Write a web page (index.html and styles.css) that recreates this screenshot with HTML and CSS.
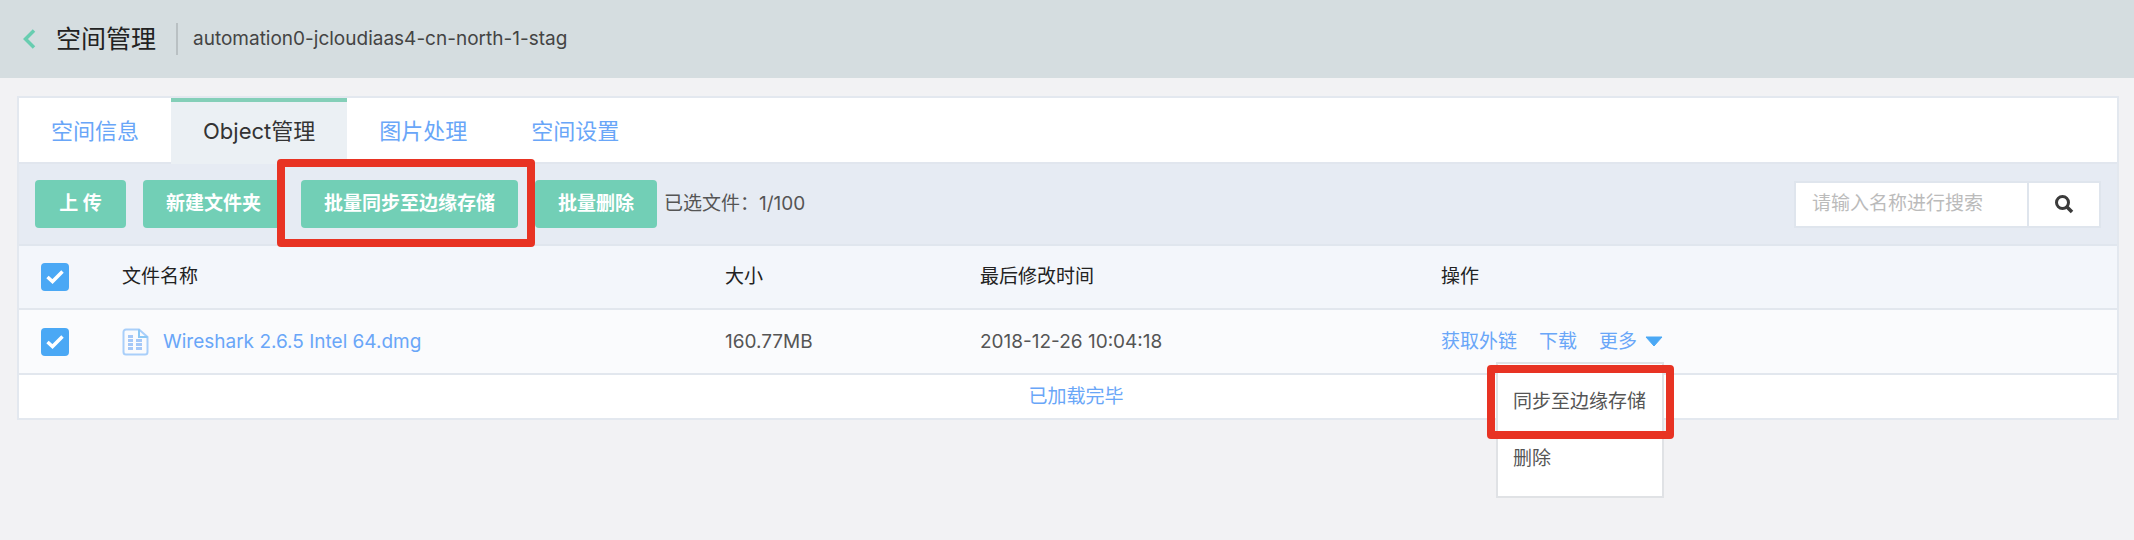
FILE: index.html
```html
<!DOCTYPE html>
<html lang="zh-CN">
<head>
<meta charset="utf-8">
<title>空间管理</title>
<link rel="stylesheet" href="styles.css">
</head>
<body>
<header class="page-header">
  <a class="back" href="#" aria-label="返回">
    <svg width="14" height="20" viewBox="0 0 14 20"><path d="M12 1.500 3.500 10l8.500 8.500" fill="none" stroke="#68cdb0" stroke-width="3.500"/></svg>
  </a>
  <h1 class="title">空间管理</h1>
  <span class="bucket">automation0-jcloudiaas4-cn-north-1-stag</span>
</header>
<main class="panel">
  <nav class="tabs">
    <a class="tab" href="#">空间信息</a>
    <a class="tab tab-active" href="#" aria-current="page">Object管理</a>
    <a class="tab" href="#">图片处理</a>
    <a class="tab" href="#">空间设置</a>
  </nav>
  <div class="toolbar">
    <button class="btn" type="button">上 传</button>
    <button class="btn" type="button">新建文件夹</button>
    <div class="marked">
      <button class="btn" type="button">批量同步至边缘存储</button>
      <span class="mark mark-button"></span>
    </div>
    <button class="btn" type="button">批量删除</button>
    <span class="selected">已选文件：1/100</span>
    <form class="search">
      <input class="search-input" type="text" placeholder="请输入名称进行搜索" aria-label="请输入名称进行搜索">
      <button class="search-btn" type="button" aria-label="搜索">
        <svg width="20" height="20" viewBox="0 0 20 20" fill="none" stroke="#3b3b3b"><circle cx="8.500" cy="8.500" r="6" stroke-width="3"/><path d="M13 13l5 5" stroke-width="3.500"/></svg>
      </button>
    </form>
  </div>
  <table class="files">
    <thead>
      <tr>
        <th class="col-check"><input class="check" type="checkbox" checked aria-label="全选"></th>
        <th class="col-name">文件名称</th>
        <th class="col-size">大小</th>
        <th class="col-time">最后修改时间</th>
        <th>操作</th>
      </tr>
    </thead>
    <tbody>
      <tr>
        <td><input class="check" type="checkbox" checked aria-label="Wireshark 2.6.5 Intel 64.dmg"></td>
        <td>
          <a class="file" href="#">
            <svg width="27" height="28" viewBox="0 0 27 28" fill="none"><path d="M17 1.500H4A2.500 2.500 0 0 0 1.500 4v20A2.500 2.500 0 0 0 4 26.500h19a2.500 2.500 0 0 0 2.500-2.500V9z" stroke="#a9cffa" stroke-width="2"/><path d="M17 1.500V9h8.500" stroke="#8cc8f5" stroke-width="2"/><path d="M6 8.500h5M6 12.500h5M6 16.500h5M6 20.500h5M14 12.500h6M14 16.500h6M14 20.500h6" stroke="#a5c8f8" stroke-width="3"/></svg>
            <span>Wireshark 2.6.5 Intel 64.dmg</span>
          </a>
        </td>
        <td>160.77MB</td>
        <td>2018-12-26 10:04:18</td>
        <td>
          <div class="actions">
            <a href="#">获取外链</a>
            <a href="#">下载</a>
            <div class="more">
              <button class="more-btn" type="button">更多<svg width="18" height="11" viewBox="0 0 18 11"><path d="M1 1h16L9 10z" fill="#4aa8f5" stroke="#4aa8f5" stroke-linejoin="round"/></svg></button>
              <div class="menu">
                <button class="menu-item" type="button">同步至边缘存储</button>
                <button class="menu-item" type="button">删除</button>
                <span class="mark mark-menu"></span>
              </div>
            </div>
          </div>
        </td>
      </tr>
    </tbody>
  </table>
  <div class="loaded">已加载完毕</div>
</main>
</body>
</html>
```
FILE: styles.css
```css
* {
  box-sizing: border-box;
}

body {
  display: flow-root;
  min-height: 100vh;
  margin: 0;
  background: #f2f2f4;
  color: #555;
  font: 19px/28px Inter, "Noto Sans CJK SC", sans-serif;
}

a {
  color: #69a6f8;
  text-decoration: none;
}

button,
input {
  font: inherit;
  margin: 0;
}

.page-header {
  display: flex;
  align-items: center;
  height: 78px;
  padding: 0 22px;
  background: #d5dde0;
}

.back {
  display: flex;
  margin-right: 20px;
}

.title {
  margin: 0 20px 0 0;
  color: #222;
  font-size: 25px;
  font-weight: 400;
  line-height: 32px;
}

.bucket {
  padding-left: 15px;
  border-left: 2px solid #b9c0c3;
  color: #444;
  font-size: 19px;
  line-height: 32px;
}

.panel {
  margin: 18px 15px 0 17px;
  border: 2px solid #e3e8ef;
  background: #fff;
}

.tabs {
  display: flex;
  height: 66px;
  border-bottom: 2px solid #e1e6ee;
}

.tab {
  height: 66px;
  padding: 0 32px;
  font-size: 22px;
  line-height: 67px;
}

.tab-active {
  border-top: 4px solid #84cfb8;
  background: #ebf0f4;
  color: #333;
  line-height: 59px;
}

.toolbar {
  display: flex;
  align-items: center;
  height: 82px;
  padding: 0 16px;
  gap: 17px;
  border-bottom: 2px solid #e0e6ee;
  background: #e6ebf3;
}

.btn {
  display: block;
  min-width: 91px;
  height: 48px;
  padding: 0 23px;
  border: 0;
  border-radius: 4px;
  background: #72cfb6;
  color: #fff;
  font-weight: 700;
}

.marked {
  position: relative;
}

.mark {
  position: absolute;
  border: 8px solid #e83323;
  border-radius: 4px;
  pointer-events: none;
}

.mark-button {
  inset: -21px -17px -19px -24px;
}

.selected {
  margin-left: -10px;
}

.search {
  display: flex;
  height: 47px;
  margin-left: auto;
  border: 2px solid #dfe5ed;
  background: #fff;
}

.search-input {
  width: 233px;
  padding: 0 16px;
  border: 0;
  border-right: 2px solid #dfe5ed;
  background: none;
}

.search-input::placeholder {
  color: #bbb;
}

.search-btn {
  display: flex;
  align-items: center;
  justify-content: center;
  width: 70px;
  border: 0;
  background: none;
}

.files {
  width: 100%;
  border-collapse: separate;
  border-spacing: 0;
  table-layout: fixed;
}

.files th,
.files td {
  height: 64px;
  padding: 0;
  border-bottom: 2px solid #e2e7ee;
  text-align: left;
}

.files th {
  background: #f3f6fb;
  color: #222;
  font-weight: 400;
}

.files td {
  height: 65px;
  background: #fafbfd;
}

.files .col-check {
  width: 103px;
}

.files .col-name {
  width: 603px;
}

.files .col-size {
  width: 255px;
}

.files .col-time {
  width: 461px;
}

.check {
  display: block;
  width: 28px;
  height: 28px;
  margin-left: 22px;
  appearance: none;
  border-radius: 4px;
  background: #4aa8f5 url("data:image/svg+xml,%3Csvg xmlns='http://www.w3.org/2000/svg' viewBox='0 0 28 28'%3E%3Cpath d='M6.500 14l5 4.500L21.500 8.500' fill='none' stroke='white' stroke-width='3.500'/%3E%3C/svg%3E") center / 28px 28px;
}

.file {
  display: flex;
  align-items: center;
  width: max-content;
  gap: 14px;
}

.actions {
  display: flex;
  gap: 22px;
}

.more {
  position: relative;
}

.more-btn {
  display: flex;
  align-items: center;
  padding: 0;
  gap: 8px;
  border: 0;
  background: none;
  color: #69a6f8;
}

.menu {
  position: absolute;
  top: 34px;
  right: -1px;
  width: 168px;
  padding: 10px 0 8px;
  border: 2px solid #e0e2e5;
  background: #fff;
}

.menu-item {
  display: block;
  width: 100%;
  height: 57px;
  padding: 0 15px;
  border: 0;
  background: none;
  color: #555;
  text-align: left;
}

.mark-menu {
  top: 1px;
  right: -12px;
  left: -11px;
  height: 74px;
}

.loaded {
  padding: 8px 0 7px 16px;
  color: #69a6f8;
  text-align: center;
}
```
